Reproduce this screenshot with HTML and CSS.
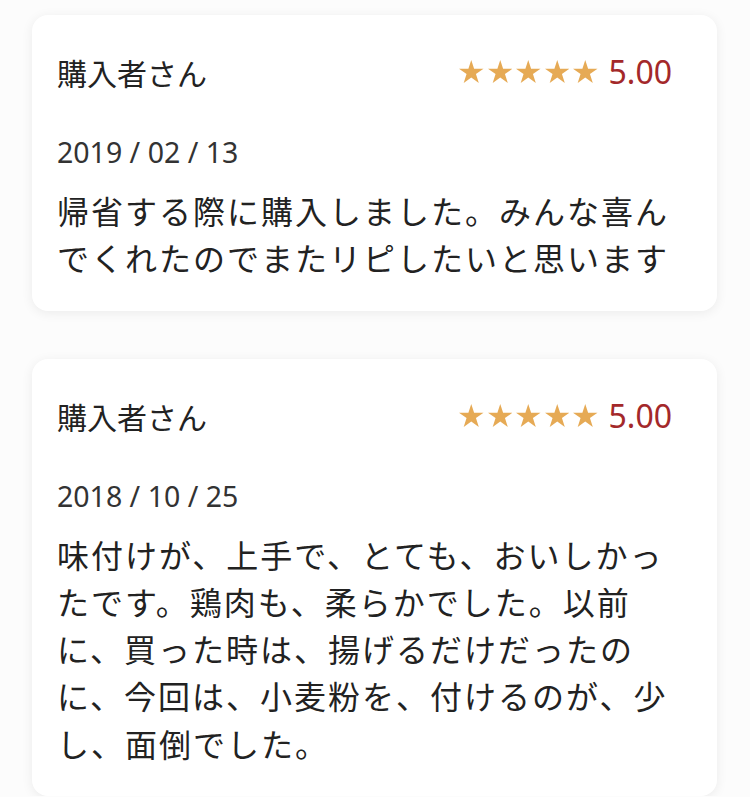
FILE: index.html
```html
<!DOCTYPE html>
<html lang="ja">
<head>
<meta charset="utf-8">
<link rel="stylesheet" href="styles.css">
</head>
<body>
<div class="list">
  <div class="card">
    <div class="head">
      <span class="name">購入者さん</span>
      <span class="rating">
        <span class="stars">
          <svg class="star" viewBox="0 0 24 23"><path d="M12 0l2.8 8.5H24l-7.4 5.3 2.8 8.7L12 17.2 4.6 22.5l2.8-8.7L0 8.5h9.2z"/></svg>
          <svg class="star" viewBox="0 0 24 23"><path d="M12 0l2.8 8.5H24l-7.4 5.3 2.8 8.7L12 17.2 4.6 22.5l2.8-8.7L0 8.5h9.2z"/></svg>
          <svg class="star" viewBox="0 0 24 23"><path d="M12 0l2.8 8.5H24l-7.4 5.3 2.8 8.7L12 17.2 4.6 22.5l2.8-8.7L0 8.5h9.2z"/></svg>
          <svg class="star" viewBox="0 0 24 23"><path d="M12 0l2.8 8.5H24l-7.4 5.3 2.8 8.7L12 17.2 4.6 22.5l2.8-8.7L0 8.5h9.2z"/></svg>
          <svg class="star" viewBox="0 0 24 23"><path d="M12 0l2.8 8.5H24l-7.4 5.3 2.8 8.7L12 17.2 4.6 22.5l2.8-8.7L0 8.5h9.2z"/></svg>
        </span>
        <span class="score">5.00</span>
      </span>
    </div>
    <div class="date">2019 / 02 / 13</div>
    <p class="text">帰省する際に購入しました。みんな喜んでくれたのでまたリピしたいと思います</p>
  </div>
  <div class="card">
    <div class="head">
      <span class="name">購入者さん</span>
      <span class="rating">
        <span class="stars">
          <svg class="star" viewBox="0 0 24 23"><path d="M12 0l2.8 8.5H24l-7.4 5.3 2.8 8.7L12 17.2 4.6 22.5l2.8-8.7L0 8.5h9.2z"/></svg>
          <svg class="star" viewBox="0 0 24 23"><path d="M12 0l2.8 8.5H24l-7.4 5.3 2.8 8.7L12 17.2 4.6 22.5l2.8-8.7L0 8.5h9.2z"/></svg>
          <svg class="star" viewBox="0 0 24 23"><path d="M12 0l2.8 8.5H24l-7.4 5.3 2.8 8.7L12 17.2 4.6 22.5l2.8-8.7L0 8.5h9.2z"/></svg>
          <svg class="star" viewBox="0 0 24 23"><path d="M12 0l2.8 8.5H24l-7.4 5.3 2.8 8.7L12 17.2 4.6 22.5l2.8-8.7L0 8.5h9.2z"/></svg>
          <svg class="star" viewBox="0 0 24 23"><path d="M12 0l2.8 8.5H24l-7.4 5.3 2.8 8.7L12 17.2 4.6 22.5l2.8-8.7L0 8.5h9.2z"/></svg>
        </span>
        <span class="score">5.00</span>
      </span>
    </div>
    <div class="date">2018 / 10 / 25</div>
    <p class="text">味付けが、上手で、とても、おいしかったです。鶏肉も、柔らかでした。以前に、買った時は、揚げるだけだったのに、今回は、小麦粉を、付けるのが、少し、面倒でした。</p>
  </div>
</div>
</body>
</html>
```

FILE: styles.css
```css
html, body {
  margin: 0;
  padding: 0;
  background: #fcfcfc;
}
body {
  font-family: "Noto Sans CJK JP", "Noto Sans", sans-serif;
  color: #222;
}
.list {
  display: flex;
  flex-direction: column;
  gap: 48px;
  padding: 15px 33px 0 32px;
}
.card {
  background: #fff;
  border-radius: 16px;
  box-shadow: 0 2px 12px rgba(0, 0, 0, 0.07);
  padding: 37px 45px 29px 25px;
}
.head {
  display: flex;
  justify-content: space-between;
  align-items: center;
  height: 40px;
}
.name {
  font-size: 30px;
  line-height: 40px;
  color: #222;
}
.rating {
  display: flex;
  align-items: center;
  gap: 11px;
}
.stars {
  display: flex;
  gap: 4px;
}
.star {
  width: 24.5px;
  height: 23.5px;
  fill: #e6aa55;
  display: block;
}
.score {
  font-family: "Noto Sans", sans-serif;
  font-size: 32px;
  line-height: 40px;
  color: #a3282a;
}
.date {
  margin-top: 40px;
  font-family: "Noto Sans", sans-serif;
  font-size: 28.5px;
  line-height: 40px;
  color: #333;
}
.text {
  margin: 15px 0 0;
  font-size: 32px;
  line-height: 47.3px;
  letter-spacing: 2px;
  color: #222;
}
```
